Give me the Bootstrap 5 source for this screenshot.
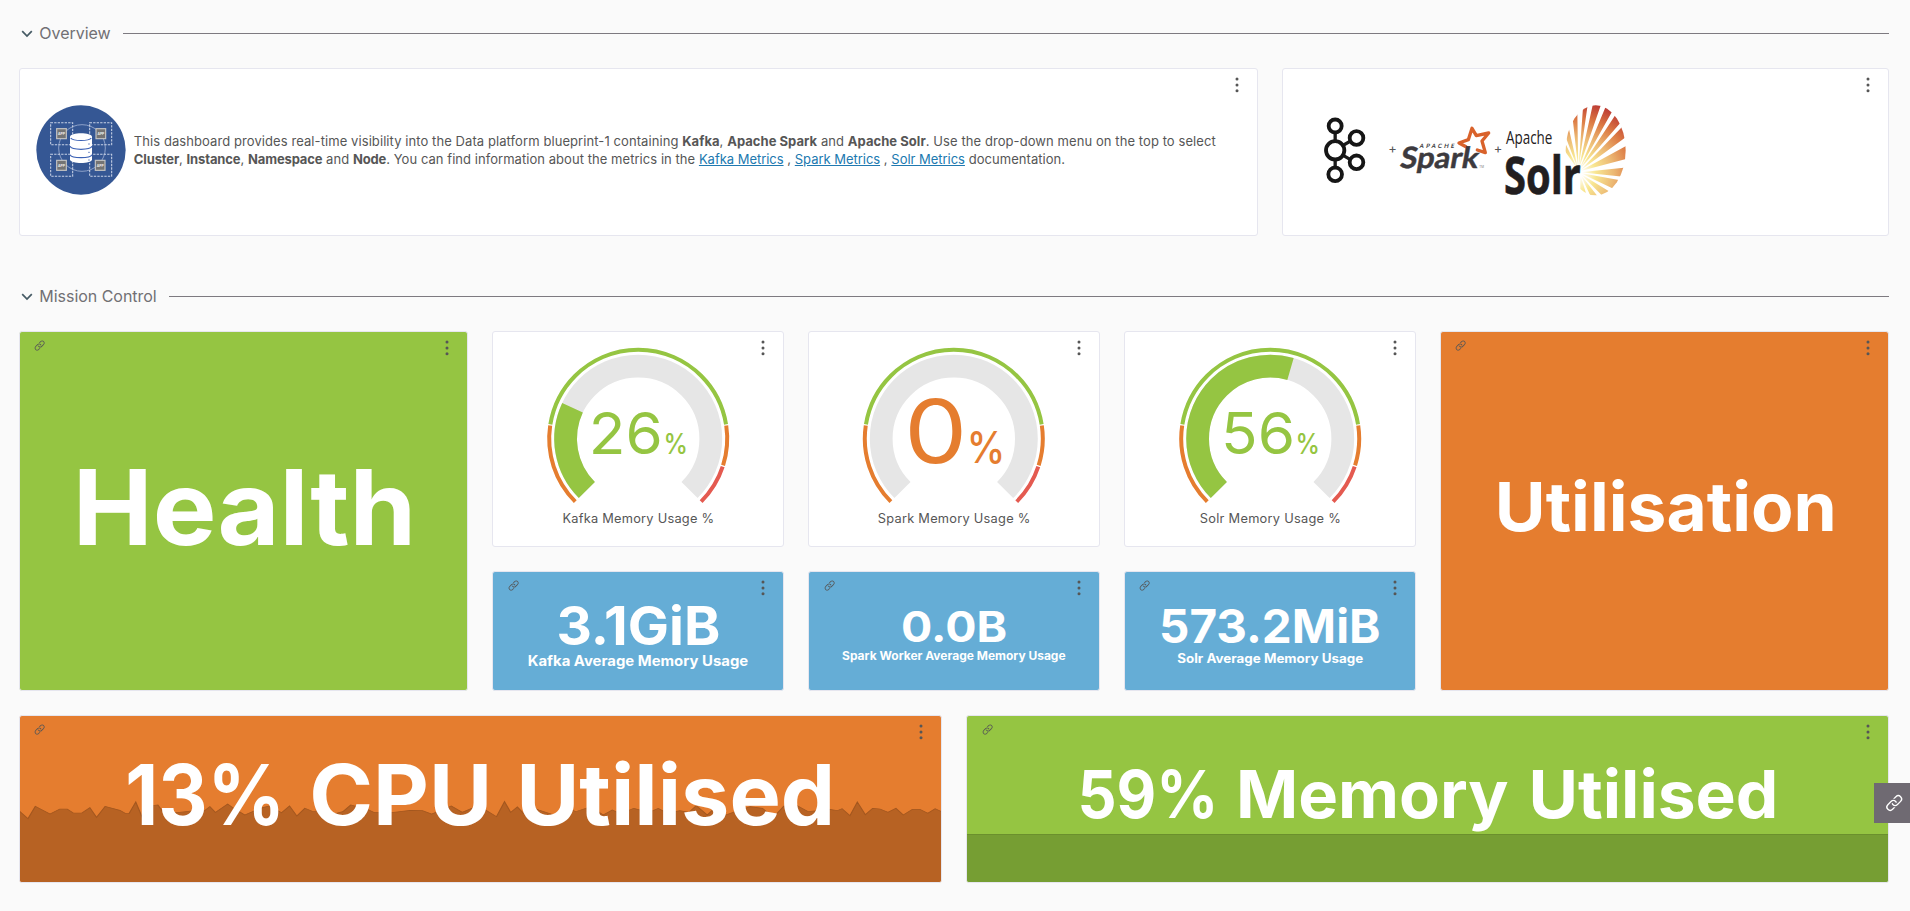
<!DOCTYPE html>
<html lang="en">
<head>
<meta charset="utf-8">
<title>Data platform dashboard</title>
<meta name="viewport" content="width=device-width, initial-scale=1">
<link href="https://cdn.jsdelivr.net/npm/bootstrap@5.3.0/dist/css/bootstrap.min.css" rel="stylesheet">
<style>
  body { background: #fafafa; color: #565656; font-family: Inter, "Liberation Sans", sans-serif; font-size: 13px; min-height: 911px; }
  .board { padding: 18.5px 20.7px 0 18.8px; }
  .board .row { --bs-gutter-x: 24px; }
  .section-title { height: 30px; margin-bottom: 19.5px; padding-left: 2.5px; gap: 6px; color: #717074; font-size: 16px; font-weight: 400; letter-spacing: -.03px; }
  .section-title hr { margin: 0 0 0 6px; border-top: 1px solid #7d7a80; opacity: 1; }
  .section-two { margin-top: 45.5px; }
  .tile { border: 1px solid #e6e6ef; border-radius: 3px; overflow: hidden; background: #fff; }
  .tile-green { background: #95c542; }
  .tile-orange { background: #e57d2f; }
  .tile-blue { background: #65add6; }
  .h-strip { height: 168px; }
  .h-tall { height: 360px; }
  .h-gauge { height: 216px; }
  .h-stat { height: 120px; margin-top: 24px; }
  .last-row { margin-top: 24px; }
  .kebab { top: 8px; right: 16px; }
  .chain { top: 6px; left: 12.5px; }
  .intro { line-height: 18px; color: #565656; white-space: nowrap; margin-bottom: 5px; }
  .intro a { color: #2079b0; letter-spacing: -.03px; }
  .intro-1 { letter-spacing: .08px; }
  .intro-1 b { letter-spacing: .04px; }
  .intro-2 { letter-spacing: .05px; }
  .intro-2 b { letter-spacing: -.13px; }
  .plus { width: 6.5px; line-height: 13px; margin-top: -3px; }
  .side-link { top: 783px; right: 0; width: 36px; height: 40px; background: #6f6a72; }
  .tile svg text { font-family: Inter, "Liberation Sans", sans-serif; }
  .big { fill: #fff; font-weight: 700; }
  .good { fill: #95c542; }
  .warn { fill: #e57d2f; }
  .pct { font-weight: 500; }
  .caption-text { fill: #565656; font-size: 12.8px; }
  .ring { fill: none; stroke-width: 4; }
  .dial { fill: none; stroke-width: 22.8; }
</style>
</head>
<body>
<svg width="0" height="0" class="position-absolute" aria-hidden="true">
  <symbol id="i-kebab" viewBox="0 0 8 16"><g fill="#565656"><circle cx="4" cy="2" r="1.5"/><circle cx="4" cy="7.9" r="1.5"/><circle cx="4" cy="13.7" r="1.5"/></g></symbol>
  <symbol id="i-chain" viewBox="0 0 36 36"><path fill="currentColor" d="M17.6 24.32l-2.46 2.44a4 4 0 0 1-5.62 0 3.92 3.92 0 0 1 0-5.55l4.69-4.65a4 4 0 0 1 5.62 0 3.86 3.86 0 0 1 1 1.71 2 2 0 0 0 .27-.27l1.29-1.28a5.89 5.89 0 0 0-1.15-1.62 6 6 0 0 0-8.44 0l-4.69 4.69a5.91 5.91 0 0 0 0 8.39 6 6 0 0 0 8.44 0l3.65-3.62h-.5a8 8 0 0 1-2.1-.24z"/><path fill="currentColor" d="M28.61 7.82a6 6 0 0 0-8.44 0l-3.65 3.62h.49a8 8 0 0 1 2.1.28l2.46-2.44a4 4 0 0 1 5.62 0 3.92 3.92 0 0 1 0 5.55l-4.69 4.65a4 4 0 0 1-5.62 0 3.86 3.86 0 0 1-1-1.71 2 2 0 0 0-.28.23l-1.29 1.28a5.89 5.89 0 0 0 1.15 1.62 6 6 0 0 0 8.44 0l4.69-4.65a5.92 5.92 0 0 0 0-8.39z"/></symbol>
  <symbol id="i-down" viewBox="0 0 12 8"><path d="M1.2 1.2 6 6.1l4.8-4.9" fill="none" stroke="#455a64" stroke-width="1.7"/></symbol>
  <symbol id="i-gauge" viewBox="-95 -95 190 170" overflow="visible">
    <path class="ring" stroke="#e57d2f" pathLength="100" stroke-dasharray="19.8 60.4 9.6 100" d="M-62.93 62.93A89 89 0 1 1 62.93 62.93"/>
    <path class="ring" stroke="#95c542" pathLength="100" stroke-dasharray="0 20.1 59.8 100" d="M-62.93 62.93A89 89 0 1 1 62.93 62.93"/>
    <path class="ring" stroke="#e45a50" pathLength="100" stroke-dasharray="0 90.1 9.9 100" d="M-62.93 62.93A89 89 0 1 1 62.93 62.93"/>
    <path class="dial" stroke="#e6e6e6" d="M-51.34 51.34A72.6 72.6 0 1 1 51.34 51.34"/>
  </symbol>
</svg>

<main class="board">
  <h2 class="section-title d-flex align-items-center">
    <svg width="12" height="8"><use href="#i-down"/></svg>
    <span>Overview</span><hr class="flex-grow-1">
  </h2>
  <div class="row">
    <div class="col-8">
      <section class="tile h-strip position-relative d-flex align-items-center ps-3 pe-5">
        <svg width="90" height="90" viewBox="48 45 270 270" class="flex-shrink-0 mb-1">
          <circle cx="183" cy="180" r="134" fill="#355794"/>
          <g fill="none" stroke="#c8d2e6">
            <circle cx="186" cy="174" r="70" stroke="#9fb0d2" stroke-width="2.5"/>
            <g stroke-width="3.2" stroke-dasharray="7 3.5">
              <rect x="92" y="98" width="66" height="66"/><rect x="209" y="98" width="66" height="66"/>
              <rect x="92" y="193" width="66" height="66"/><rect x="209" y="193" width="66" height="66"/>
            </g>
          </g>
          <g fill="#747474" stroke="#c4c4c4" stroke-width="3.5">
            <rect x="110" y="116" width="29" height="30"/><rect x="228" y="116" width="29" height="30"/>
            <rect x="110" y="211" width="29" height="30"/><rect x="226" y="211" width="29" height="30"/>
          </g>
          <g fill="#eee" font-size="10" font-weight="700" text-anchor="middle">
            <text x="124.500" y="135">APP</text><text x="242.500" y="135">APP</text>
            <text x="124.500" y="230">APP</text><text x="240.500" y="230">APP</text>
          </g>
          <path d="M150 141c0-15 66-15 66 0v67c0 15-66 15-66 0z" fill="#fff"/>
          <path d="M152 144c8 10 54 10 62 0M150 169c6 12 60 12 66 0M150 194c6 12 60 12 66 0" fill="none" stroke="#3d62b5" stroke-width="3.500"/>
          <path d="M205 162h4M205 187h4M205 210h4" stroke="#3d62b5" stroke-width="3"/>
        </svg>
        <p class="intro ms-2">
          <span class="intro-1">This dashboard provides real-time visibility into the Data platform blueprint-1 containing <b>Kafka</b>, <b>Apache Spark</b> and <b>Apache Solr</b>. Use the drop-down menu on the top to select</span><br>
          <span class="intro-2"><b>Cluster</b>, <b>Instance</b>, <b>Namespace</b> and <b>Node</b>. You can find information about the metrics in the <a href="#">Kafka Metrics</a> , <a href="#">Spark Metrics</a> , <a href="#">Solr Metrics</a> documentation.</span>
        </p>
        <svg class="kebab position-absolute" width="8" height="16"><use href="#i-kebab"/></svg>
      </section>
    </div>
    <div class="col-4">
      <section class="tile h-strip position-relative d-flex align-items-center ps-4 pb-1">
        <!-- Kafka -->
        <svg class="flex-shrink-0 ms-1" width="78.500" height="90.67" viewBox="2.500 44 235.500 272">
          <path d="M75 120v115M90 170l45-26M90 190l45 26" stroke="#1c1c1c" stroke-width="10"/>
          <g fill="#fff" stroke="#161616" stroke-width="11.5">
            <circle cx="75" cy="107" r="19.500"/><circle cx="75" cy="180" r="27.500"/><circle cx="139" cy="143" r="20.500"/>
            <circle cx="139" cy="216" r="20.500"/><circle cx="75" cy="252" r="20.500"/>
          </g>
        </svg>
        <span class="plus d-flex justify-content-center">+</span>
        <!-- Spark -->
        <svg class="flex-shrink-0" width="99" height="90.67" viewBox="258 44 297 272">
          <path d="M468 169 447 158l28-10 11-34 13 22 37-8-20 24 10 35-24-8" fill="none" stroke="#d9622b" stroke-width="10" stroke-linejoin="round" stroke-linecap="round"/>
          <text transform="translate(328 172) skewX(-12)" font-size="18" font-weight="700" fill="#3c3a3e" textLength="104" style="font-family:Lato,sans-serif">APACHE</text>
          <text transform="translate(267 233) skewX(-10)" font-size="88" font-weight="700" fill="#3c3a3e" stroke="#3c3a3e" stroke-width="1.500" textLength="234" lengthAdjust="spacingAndGlyphs" style="font-family:Lato,sans-serif">Spark</text>
          <text x="508" y="234" font-size="9" fill="#777">TM</text>
        </svg>
        <span class="plus d-flex justify-content-center">+</span>
        <!-- Solr -->
        <svg class="flex-shrink-0 overflow-visible" width="126.670" height="90.670" viewBox="574 44 380 272">
          <defs>
            <radialGradient id="sun" gradientUnits="userSpaceOnUse" cx="805" cy="250" r="215">
              <stop offset=".05" stop-color="#fff"/><stop offset=".25" stop-color="#f8e691"/><stop offset=".5" stop-color="#ecb873"/><stop offset=".75" stop-color="#dc7a44"/><stop offset="1" stop-color="#bc3a34"/>
            </radialGradient>
            <clipPath id="oval"><ellipse cx="858" cy="180" rx="90" ry="135"/></clipPath>
          </defs>
          <path clip-path="url(#oval)" fill="url(#sun)" d="M806 240 764 180 766 157ZM806 240 768 140 777 112ZM806 240 789 84 803 64ZM806 240 820 52 834 44ZM806 240 850 40H875ZM808 240 891 42 913 54ZM808 240 921 68 937 92ZM810 242 937 110 954 136ZM810 243 956 163V204ZM812 246 956 231 948 260ZM812 248 940 271 919 299ZM812 250 898 303 878 316ZM812 252 864 318H843ZM812 254 832 318H812Z"/>
          <text x="589" y="162" font-size="52" fill="#252122" textLength="139" lengthAdjust="spacingAndGlyphs" style="font-family:'Open Sans',sans-serif">Apache</text>
          <text x="583" y="312" font-size="156" font-weight="700" fill="#221e1f" stroke="#221e1f" stroke-width="2" textLength="231" lengthAdjust="spacingAndGlyphs" style="font-family:'Open Sans',sans-serif">Solr</text>
        </svg>
        <svg class="kebab position-absolute" width="8" height="16"><use href="#i-kebab"/></svg>
      </section>
    </div>
  </div>

  <h2 class="section-title section-two d-flex align-items-center">
    <svg width="12" height="8"><use href="#i-down"/></svg>
    <span>Mission Control</span><hr class="flex-grow-1">
  </h2>
  <div class="row">
    <div class="col-3">
      <section class="tile tile-green h-tall position-relative">
        <svg class="w-100 h-100 d-block" viewBox="19.800 332 447.600 358"><text class="big" x="72.500" y="545" font-size="104" textLength="343.500" lengthAdjust="spacingAndGlyphs">Health</text></svg>
        <svg class="chain position-absolute" width="15" height="15" color="#565656"><use href="#i-chain"/></svg>
        <svg class="kebab position-absolute" width="8" height="16"><use href="#i-kebab"/></svg>
      </section>
    </div>
    <div class="col-2">
      <section class="tile h-gauge position-relative">
        <svg class="w-100 h-100 d-block" viewBox="493.800 332 289.750 214">
          <use href="#i-gauge" x="544" y="343.700" width="190" height="170"/>
          <path class="dial" stroke="#95c542" pathLength="100" stroke-dasharray="26 100" transform="translate(639 438.700)" d="M-51.340 51.340A72.600 72.600 0 1 1 51.340 51.340"/>
          <text class="good" x="589.500" y="453.700" font-size="58" textLength="74" lengthAdjust="spacingAndGlyphs">26</text>
          <text class="good pct" x="664.300" y="453.700" font-size="28" textLength="24.500" lengthAdjust="spacingAndGlyphs">%</text>
          <text class="caption-text" x="563.200" y="522.700" textLength="151.700">Kafka Memory Usage %</text>
        </svg>
        <svg class="kebab position-absolute" width="8" height="16"><use href="#i-kebab"/></svg>
      </section>
      <section class="tile tile-blue h-stat position-relative">
        <svg class="w-100 h-100 d-block" viewBox="493.800 572 289.750 118">
          <text class="big" x="557.200" y="645" font-size="53" textLength="164" lengthAdjust="spacingAndGlyphs">3.1GiB</text>
          <text class="big" x="528.500" y="665.700" font-size="14" textLength="220.500" lengthAdjust="spacingAndGlyphs">Kafka Average Memory Usage</text>
        </svg>
        <svg class="chain position-absolute" width="15" height="15" color="#565656"><use href="#i-chain"/></svg>
        <svg class="kebab position-absolute" width="8" height="16"><use href="#i-kebab"/></svg>
      </section>
    </div>
    <div class="col-2">
      <section class="tile h-gauge position-relative">
        <svg class="w-100 h-100 d-block" viewBox="809.200 332 289.750 214">
          <use href="#i-gauge" x="859" y="343.700" width="190" height="170"/>
          <text class="warn" x="904.500" y="462.500" font-size="88" textLength="63" lengthAdjust="spacingAndGlyphs">0</text>
          <text class="warn pct" x="967" y="462.500" font-size="44" textLength="38.500" lengthAdjust="spacingAndGlyphs">%</text>
          <text class="caption-text" x="878" y="522.700" textLength="152.500">Spark Memory Usage %</text>
        </svg>
        <svg class="kebab position-absolute" width="8" height="16"><use href="#i-kebab"/></svg>
      </section>
      <section class="tile tile-blue h-stat position-relative">
        <svg class="w-100 h-100 d-block" viewBox="809.200 572 289.750 118">
          <text class="big" x="901.300" y="642" font-size="42" textLength="106" lengthAdjust="spacingAndGlyphs">0.0B</text>
          <text class="big" x="842.300" y="660" font-size="11.500" textLength="223.500" lengthAdjust="spacingAndGlyphs">Spark Worker Average Memory Usage</text>
        </svg>
        <svg class="chain position-absolute" width="15" height="15" color="#565656"><use href="#i-chain"/></svg>
        <svg class="kebab position-absolute" width="8" height="16"><use href="#i-kebab"/></svg>
      </section>
    </div>
    <div class="col-2">
      <section class="tile h-gauge position-relative">
        <svg class="w-100 h-100 d-block" viewBox="1125 332 289.750 214">
          <use href="#i-gauge" x="1175.200" y="343.700" width="190" height="170"/>
          <path class="dial" stroke="#95c542" pathLength="100" stroke-dasharray="56 100" transform="translate(1270.200 438.700)" d="M-51.340 51.340A72.600 72.600 0 1 1 51.340 51.340"/>
          <text class="good" x="1221" y="453.700" font-size="58" textLength="74" lengthAdjust="spacingAndGlyphs">56</text>
          <text class="good pct" x="1295.500" y="453.700" font-size="28" textLength="24.500" lengthAdjust="spacingAndGlyphs">%</text>
          <text class="caption-text" x="1199.800" y="522.700" textLength="141">Solr Memory Usage %</text>
        </svg>
        <svg class="kebab position-absolute" width="8" height="16"><use href="#i-kebab"/></svg>
      </section>
      <section class="tile tile-blue h-stat position-relative">
        <svg class="w-100 h-100 d-block" viewBox="1125 572 289.750 118">
          <text class="big" x="1159" y="643" font-size="47" textLength="221.500" lengthAdjust="spacingAndGlyphs">573.2MiB</text>
          <text class="big" x="1177.200" y="662.700" font-size="12.500" textLength="186" lengthAdjust="spacingAndGlyphs">Solr Average Memory Usage</text>
        </svg>
        <svg class="chain position-absolute" width="15" height="15" color="#565656"><use href="#i-chain"/></svg>
        <svg class="kebab position-absolute" width="8" height="16"><use href="#i-kebab"/></svg>
      </section>
    </div>
    <div class="col-3">
      <section class="tile tile-orange h-tall position-relative">
        <svg class="w-100 h-100 d-block" viewBox="1440.700 332 447.600 358"><text class="big" x="1494.500" y="531" font-size="67.500" textLength="342" lengthAdjust="spacingAndGlyphs">Utilisation</text></svg>
        <svg class="chain position-absolute" width="15" height="15" color="#565656"><use href="#i-chain"/></svg>
        <svg class="kebab position-absolute" width="8" height="16"><use href="#i-kebab"/></svg>
      </section>
    </div>
  </div>

  <div class="row last-row">
    <div class="col-6">
      <section class="tile tile-orange h-strip position-relative">
        <svg class="w-100 h-100 d-block position-absolute" viewBox="33 48 1504 498" preserveAspectRatio="none">
          <path fill="#b76223" stroke="#a3571f" stroke-width="2" d="M30 330 46 356 58 319 82 342 98 327H110L120 339H134L147 323 158 352 172 319 196 331 206 341 211 341 222 306 232 350 245 318 258 315 266 335 290 338 318 332 330 338 343 320 352 337 372 312 382 325 400 345 425 325 440 318 460 338 473 318 485 348 498 325 512 335 530 325 545 342 560 335 573 315 600 328 612 338H640L670 331 690 332 705 342 725 328 737 318 755 337 780 318 793 330 811 350 824 305 834 337 845 321 855 340 870 323 880 330 905 345 925 320 940 335 965 320 985 345 1000 330 1013 341 1035 325 1060 337 1075 325 1090 340 1110 332 1125 337 1137 317 1155 345 1168 323 1185 345 1200 335 1225 320 1245 325 1263 352 1280 318 1300 315 1320 335 1355 328 1367 332 1375 326 1388 347 1400 306 1413 344 1425 325 1437 327 1450 337 1463 325 1475 345 1490 328H1502L1515 340 1527 326 1540 337V560H30Z"/>
        </svg>
        <svg class="w-100 h-100 d-block position-relative" viewBox="19.800 716 921.250 166">
          <text class="big" y="825" font-size="84"><tspan x="125" textLength="160" lengthAdjust="spacingAndGlyphs">13%</tspan> <tspan x="309" textLength="183" lengthAdjust="spacingAndGlyphs">CPU</tspan> <tspan x="516" textLength="319" lengthAdjust="spacingAndGlyphs">Utilised</tspan></text>
        </svg>
        <svg class="chain position-absolute" width="15" height="15" color="#565656"><use href="#i-chain"/></svg>
        <svg class="kebab position-absolute" width="8" height="16"><use href="#i-kebab"/></svg>
      </section>
    </div>
    <div class="col-6">
      <section class="tile tile-green h-strip position-relative">
        <svg class="w-100 h-100 d-block" viewBox="967 716 921.250 166">
          <path d="M960 834.500H1900V900H960Z" fill="#769e33" stroke="#6b902d"/>
          <text class="big" y="818" font-size="66"><tspan x="1077.500" textLength="141" lengthAdjust="spacingAndGlyphs">59%</tspan> <tspan x="1236" textLength="272.500" lengthAdjust="spacingAndGlyphs">Memory</tspan> <tspan x="1528.500" textLength="250" lengthAdjust="spacingAndGlyphs">Utilised</tspan></text>
        </svg>
        <svg class="chain position-absolute" width="15" height="15" color="#565656"><use href="#i-chain"/></svg>
        <svg class="kebab position-absolute" width="8" height="16"><use href="#i-kebab"/></svg>
      </section>
    </div>
  </div>
</main>

<a href="#" class="side-link position-fixed d-flex align-items-center justify-content-center text-white ps-1" aria-label="Links">
  <svg width="24" height="24"><use href="#i-chain"/></svg>
</a>
<script src="https://cdn.jsdelivr.net/npm/bootstrap@5.3.0/dist/js/bootstrap.bundle.min.js"></script>
</body>
</html>
